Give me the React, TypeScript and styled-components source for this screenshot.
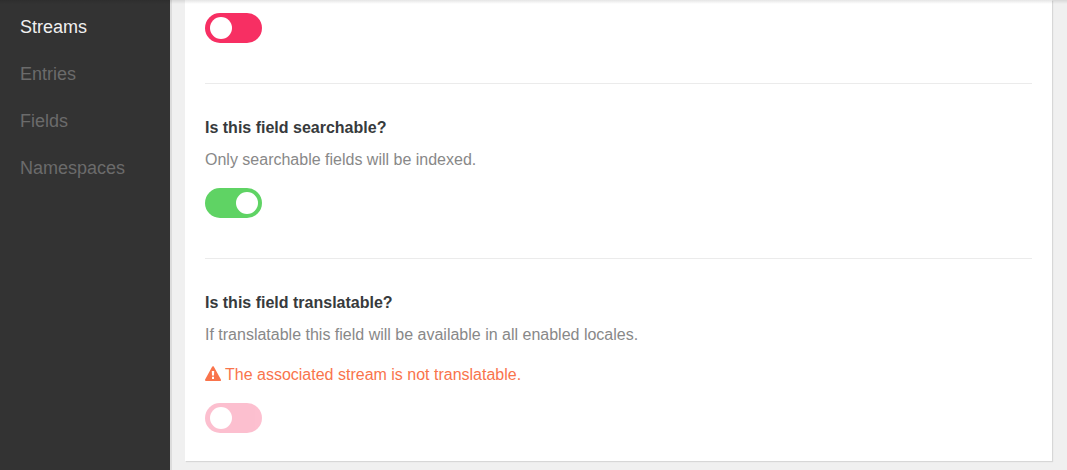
import React from 'react';
import styled, { createGlobalStyle } from 'styled-components';

const GlobalStyle = createGlobalStyle`
  *, *::before, *::after { box-sizing: border-box; }
  html, body { margin: 0; background: #f0f0f0; overflow: hidden; }
  body { font-family: "Liberation Sans", Arial, sans-serif; font-size: 16px; line-height: 24px; color: #373a3c; }
`;

const Page = styled.div`
  position: relative;
  display: flex;
  height: 470px;
`;

const TopShade = styled.div`
  position: absolute;
  inset: 0 0 auto;
  height: 4px;
  background: linear-gradient(rgba(0, 0, 0, 0.1), rgba(0, 0, 0, 0));
`;

const Sidebar = styled.nav`
  flex: 0 0 172px;
  padding-top: 4px;
  background: #333;
  border-right: 2px solid #dcdcdc;
`;

const NavItem = styled.a<{ $active?: boolean }>`
  display: block;
  padding: 10px 20px;
  font-size: 18px;
  line-height: 27px;
  color: ${({ $active }) => ($active ? '#f0f0f0' : '#6b6b6b')};
`;

const Main = styled.main`
  flex: 1;
  padding: 0 15px 9px 13px;
`;

const Card = styled.section`
  height: 461px;
  padding: 0 20px;
  background: #fff;
  box-shadow: 1px 1px 1px rgba(0, 0, 0, 0.1);
`;

const Field = styled.div<{ $first?: boolean }>`
  display: flex;
  flex-direction: column;
  align-items: flex-start;
  height: ${({ $first }) => ($first ? '84px' : '175px')};
  padding-top: ${({ $first }) => ($first ? '13px' : '32px')};
  border-bottom: 1px solid #ebebeb;

  &:last-child {
    height: auto;
    border-bottom: 0;
  }
`;

const Label = styled.label`
  font-weight: bold;
`;

const Help = styled.p`
  margin: 8px 0 16px;
  color: #888;
`;

const Warning = styled.p`
  display: flex;
  align-items: center;
  gap: 4px;
  margin: 0 0 16px;
  color: #f9744c;

  svg {
    margin-bottom: 2px;
  }
`;

const Toggle = styled.span<{ $on?: boolean; $disabled?: boolean }>`
  display: flex;
  justify-content: ${({ $on }) => ($on ? 'flex-end' : 'flex-start')};
  width: 57px;
  height: 30px;
  padding: ${({ $on }) => ($on ? '4px 4px' : '4px 5px')};
  border-radius: 15px;
  background: ${({ $on }) => ($on ? '#5fd364' : '#f72f63')};
  opacity: ${({ $disabled }) => ($disabled ? 0.3 : 1)};
`;

const Knob = styled.span`
  width: 22px;
  height: 22px;
  border-radius: 50%;
  background: #fff;
`;

const WarningIcon = () => (
  <svg width="16" height="16" viewBox="0 0 16 16" aria-hidden="true">
    <path
      d="M8 1.2L15 14.1H1Z"
      fill="currentColor"
      stroke="currentColor"
      strokeWidth="2"
      strokeLinejoin="round"
    />
    <path d="M6.8 5h2.4l-.2 4.5H7ZM7 10.7h2V13H7Z" fill="#fff" />
  </svg>
);

const sections = ['Streams', 'Entries', 'Fields', 'Namespaces'];

export default function App() {
  return (
    <Page>
      <GlobalStyle />
      <Sidebar>
        {sections.map((name, i) => (
          <NavItem key={name} $active={i === 0}>{name}</NavItem>
        ))}
      </Sidebar>
      <Main>
        <Card>
          <Field $first>
            <Toggle><Knob /></Toggle>
          </Field>
          <Field>
            <Label>Is this field searchable?</Label>
            <Help>Only searchable fields will be indexed.</Help>
            <Toggle $on><Knob /></Toggle>
          </Field>
          <Field>
            <Label>Is this field translatable?</Label>
            <Help>If translatable this field will be available in all enabled locales.</Help>
            <Warning><WarningIcon /> The associated stream is not translatable.</Warning>
            <Toggle $disabled><Knob /></Toggle>
          </Field>
        </Card>
      </Main>
      <TopShade />
    </Page>
  );
}
